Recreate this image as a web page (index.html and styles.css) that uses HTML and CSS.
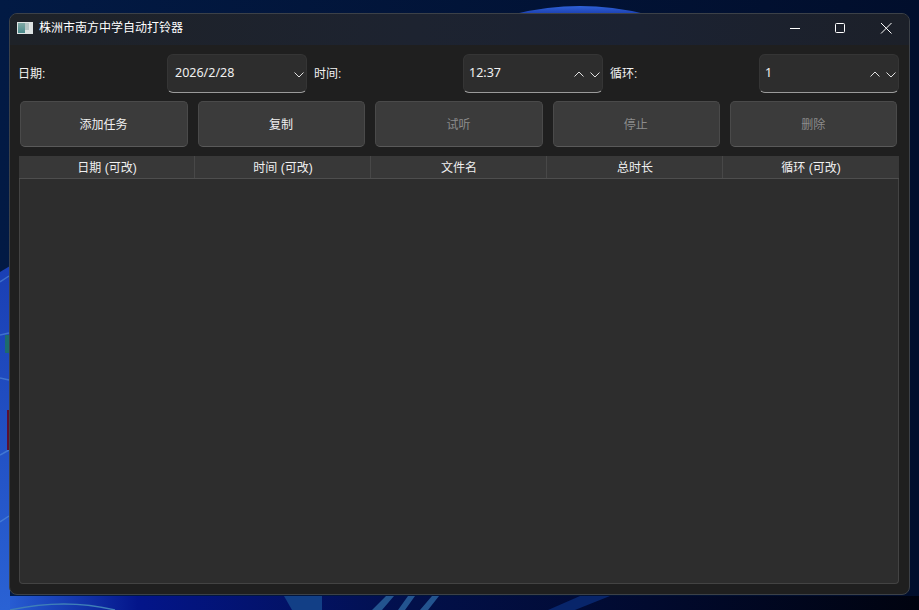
FILE: index.html
```html
<!DOCTYPE html>
<html lang="zh-CN">
<head>
<meta charset="utf-8">
<title>株洲市南方中学自动打铃器</title>
<link rel="stylesheet" href="styles.css">
</head>
<body>
<div class="desktop">
  <svg class="wallpaper" viewBox="0 0 919 610" width="919" height="610" aria-hidden="true">
    <defs>
      <linearGradient id="bg" x1="0" y1="0" x2="1" y2="0">
        <stop offset="0" stop-color="#021a44"/><stop offset="1" stop-color="#010e2c"/>
      </linearGradient>
      <linearGradient id="dome" x1="0" y1="0" x2="0" y2="1">
        <stop offset="0" stop-color="#2f62d8"/><stop offset="1" stop-color="#1c3fb0"/>
      </linearGradient>
      <linearGradient id="side" x1="0" y1="0" x2="0" y2="1">
        <stop offset="0" stop-color="#1a3fb4"/><stop offset="1" stop-color="#2a62d4"/>
      </linearGradient>
      <linearGradient id="foot" x1="0" y1="0" x2="1" y2="0">
        <stop offset="0" stop-color="#2a62d8"/><stop offset=".15" stop-color="#03158a"/><stop offset=".45" stop-color="#02104a"/><stop offset="1" stop-color="#00030f"/>
      </linearGradient>
    </defs>
    <rect width="919" height="610" fill="url(#bg)"/>
    <rect y="596" width="919" height="14" fill="url(#foot)"/>
    <path d="M515 14 Q580 -2 645 14Z" fill="url(#dome)"/>
    <path d="M0 272 L10 266 V610 H0Z" fill="url(#side)"/>
    <path d="M0 282 L9 276 M0 335 L9 333 M0 378 L9 380 M0 455 L9 450 M0 522 L9 516" stroke="#5f9be0" stroke-width="1.5" stroke-opacity=".5" fill="none"/>
    <rect x="5" y="335" width="4" height="18" fill="#1c7a4a" fill-opacity=".7"/>
    <rect x="7" y="410" width="2" height="40" fill="#5a1030"/>
    <path d="M10 610 Q65 598 115 610" stroke="#3f7fb8" stroke-width="1.5" fill="none"/>
    <path d="M284 596 L292 610 H322 V596Z" fill="#123f86"/>
    <path d="M372 610 L386 596 H394 L382 610Z M398 610 L408 596 H415 L405 610Z M420 610 L432 596 H439 L428 610Z" fill="#23548f"/>
    <path d="M548 610 L580 596 H610 L575 610Z" fill="#08256a"/>
  </svg>

  <main class="window">
    <header class="titlebar">
      <div class="title-group">
        <svg class="app-icon" viewBox="0 0 16 12" width="16" height="12" aria-hidden="true">
          <defs>
            <linearGradient id="ico" x1="0" y1="0" x2="0" y2="1">
              <stop offset="0" stop-color="#7fa8a4"/><stop offset="1" stop-color="#4a8a8c"/>
            </linearGradient>
          </defs>
          <rect width="16" height="12" fill="#dde3e3"/>
          <rect x="1" y="1" width="7" height="10" fill="url(#ico)"/>
          <rect x="8" y="1" width="4" height="7" fill="#b4c4c4"/>
        </svg>
        <span class="title-text">株洲市南方中学自动打铃器</span>
      </div>
      <div class="win-controls">
        <svg class="win-btn" viewBox="0 0 46 28" width="46" height="28" aria-hidden="true"><path d="M19 14.5H29" stroke="#fff" stroke-width="1" fill="none"/></svg>
        <svg class="win-btn" viewBox="0 0 46 28" width="46" height="28" aria-hidden="true"><rect x="18.5" y="9.5" width="9" height="9" rx="1" stroke="#fff" stroke-width="1" fill="none"/></svg>
        <svg class="win-btn" viewBox="0 0 46 28" width="46" height="28" aria-hidden="true"><path d="M18 9L28.5 19.5M28.5 9L18 19.5" stroke="#fff" stroke-width="1" fill="none"/></svg>
      </div>
    </header>

    <section class="content">
      <div class="form-row">
        <div class="form-group">
          <label class="field-label">日期:</label>
          <div class="field field-date">
            <span class="field-value">2026/2/28</span>
            <span class="spin">
              <svg class="chev" viewBox="0 0 12 7" width="12" height="7" aria-hidden="true"><path d="M1.5 1.5L6 6L10.5 1.5" stroke="#e0e0e0" stroke-width="1" fill="none"/></svg>
            </span>
          </div>
        </div>
        <div class="form-group">
          <label class="field-label">时间:</label>
          <div class="field">
            <span class="field-value">12:37</span>
            <span class="spin">
              <svg class="chev" viewBox="0 0 12 7" width="12" height="7" aria-hidden="true"><path d="M1.5 5.5L6 1L10.5 5.5" stroke="#e0e0e0" stroke-width="1" fill="none"/></svg>
              <svg class="chev" viewBox="0 0 12 7" width="12" height="7" aria-hidden="true"><path d="M1.5 1.5L6 6L10.5 1.5" stroke="#e0e0e0" stroke-width="1" fill="none"/></svg>
            </span>
          </div>
        </div>
        <div class="form-group">
          <label class="field-label">循环:</label>
          <div class="field">
            <span class="field-value">1</span>
            <span class="spin">
              <svg class="chev" viewBox="0 0 12 7" width="12" height="7" aria-hidden="true"><path d="M1.5 5.5L6 1L10.5 5.5" stroke="#e0e0e0" stroke-width="1" fill="none"/></svg>
              <svg class="chev" viewBox="0 0 12 7" width="12" height="7" aria-hidden="true"><path d="M1.5 1.5L6 6L10.5 1.5" stroke="#e0e0e0" stroke-width="1" fill="none"/></svg>
            </span>
          </div>
        </div>
      </div>

      <div class="button-row">
        <button class="btn">添加任务</button>
        <button class="btn">复制</button>
        <button class="btn is-disabled">试听</button>
        <button class="btn is-disabled">停止</button>
        <button class="btn is-disabled">删除</button>
      </div>

      <div class="table">
        <div class="table-head">
          <div class="th">日期 (可改)</div>
          <div class="th">时间 (可改)</div>
          <div class="th">文件名</div>
          <div class="th">总时长</div>
          <div class="th">循环 (可改)</div>
        </div>
      </div>
    </section>
  </main>
</div>
</body>
</html>
```
FILE: styles.css
```css
* { box-sizing: border-box; }
html, body { margin: 0; padding: 0; }
body {
  width: 919px;
  height: 610px;
  overflow: hidden;
  font-family: "Liberation Sans", "Noto Sans CJK SC", sans-serif;
  font-size: 12px;
  color: #fff;
}
.desktop { position: relative; width: 919px; height: 610px; overflow: hidden; }
.wallpaper { position: absolute; left: 0; top: 0; display: block; }

.window {
  position: absolute;
  left: 9px;
  top: 13px;
  width: 901px;
  height: 582px;
  display: flex;
  flex-direction: column;
  background: #1f1f1f;
  border: 1px solid #3c4148;
  border-radius: 8px;
  overflow: hidden;
}

.titlebar {
  flex: none;
  height: 31px;
  padding-bottom: 3px;
  display: flex;
  align-items: center;
  justify-content: space-between;
  background: linear-gradient(90deg, #1e2228 0%, #1d2330 45%, #1b2232 70%, #1c2029 100%);
}
.title-group { display: flex; align-items: center; gap: 6px; padding-left: 7px; }
.app-icon { display: block; flex: none; }
.title-text { font-size: 12px; line-height: 16px; color: #fff; }
.win-controls { display: flex; }
.win-btn { display: block; }

.content {
  flex: 1;
  min-height: 0;
  display: flex;
  flex-direction: column;
  padding: 9px 10px 10px 8px;
}

.form-row { display: flex; gap: 7px; }
.form-group { width: 289px; display: flex; align-items: center; }
.field-label { width: 149px; flex: none; font-size: 12px; color: #f2f2f2; padding: 0 0 2px; }
.field {
  width: 140px;
  height: 39px;
  flex: none;
  display: flex;
  align-items: center;
  justify-content: space-between;
  padding: 0 1px 0 5px;
  background: #2d2d2d;
  border: 1px solid #353535;
  border-bottom: 1px solid #9a9a9a;
  border-radius: 6px;
}
.field-date { padding-left: 7px; }
.field-value { font-family: "Noto Sans", sans-serif; font-size: 12.5px; line-height: 16px; padding-bottom: 1px; color: #f0f0f0; }
.spin { display: flex; gap: 4px; align-items: center; padding-top: 1px; }
.chev { display: block; }

.button-row {
  display: grid;
  grid-template-columns: repeat(5, 1fr);
  gap: 10px;
  padding: 8px 1.6px 9px 2.4px;
}
.btn {
  height: 46px;
  font-family: inherit;
  font-size: 12px;
  color: #f0f0f0;
  background: #3b3b3b;
  border: 1px solid #4a4a4a;
  border-bottom-color: #5a5a5a;
  border-radius: 5px;
  padding: 0 1px 2px 0;
}
.btn.is-disabled { color: #8c8c8c; }

.table {
  flex: 1;
  min-height: 0;
  margin-left: 1px;
  background: #2d2d2d;
  border: 1px solid #434343;
  border-top: 0;
  border-radius: 0 0 4px 4px;
}
.table-head {
  height: 23px;
  margin: 0 -1px;
  padding-bottom: 2px;
  display: grid;
  grid-template-columns: repeat(5, 1fr);
  background: #383838;
  border-bottom: 1px solid #4e4e4e;
}
.th {
  display: flex;
  align-items: center;
  justify-content: center;
  font-size: 12px;
  color: #f0f0f0;
  position: relative;
}
.th:not(:last-child)::after {
  content: "";
  position: absolute;
  right: 0;
  top: 0;
  bottom: -2px;
  width: 1px;
  background: #484848;
}
```
